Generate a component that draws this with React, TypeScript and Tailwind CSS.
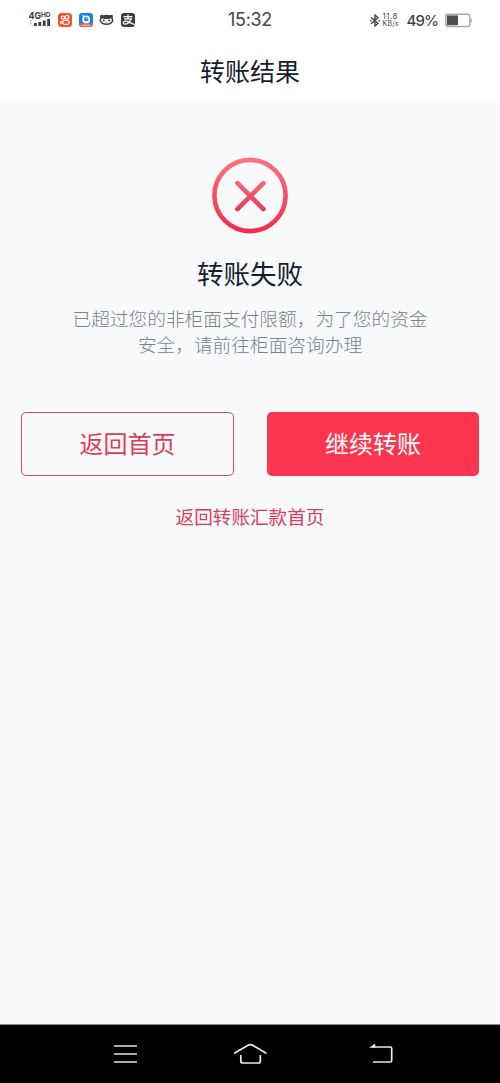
/**
 * @file src/App.tsx
 * @description Pantalla de resultado de transferencia (转账结果) con estado fallido.
 */

function StatusBar() {
  return (
    <div className="grid grid-cols-3 items-center h-10 px-[28px] text-[#444444] font-['Inter','Noto_Sans_CJK_SC',sans-serif]">
      {/* Señal y apps */}
      <div className="flex items-center">
        <svg className="w-[24px] h-[18px] shrink-0" viewBox="0 0 24 18" fill="#3c3c3c">
          <text x="0.5" y="7.6" fontSize="9.5" fontWeight="700" fontFamily="Inter, sans-serif" textLength="12.5" lengthAdjust="spacingAndGlyphs">4G</text>
          <text x="13" y="5.8" fontSize="6.5" fontWeight="700" fontFamily="Inter, sans-serif" textLength="9.5" lengthAdjust="spacingAndGlyphs">HD</text>
          <path d="M2 9.3h1.5v1.6H2zM2 11.8h1.5v1.700H2z" opacity="0.35" />
          <rect x="6" y="12" width="2.8" height="3" />
          <rect x="10.4" y="11" width="2.8" height="4" />
          <rect x="14.8" y="9.5" width="2.8" height="5.5" />
          <rect x="19.2" y="8" width="2.8" height="7" />
        </svg>
        <svg className="w-[14px] h-[14px] ml-[6px] shrink-0" viewBox="0 0 14 14" fill="none" stroke="#fff">
          <rect width="14" height="14" rx="3.5" fill="#f4502a" stroke="none" />
          <circle cx="5" cy="4.6" r="1.6" strokeWidth="1.2" />
          <circle cx="9" cy="4.3" r="1.9" strokeWidth="1.2" />
          <rect x="5" y="7.5" width="6" height="3.8" rx="1.2" strokeWidth="1.2" />
          <path d="M5 9.2L2.8 8v3L5 9.9" strokeWidth="1" />
        </svg>
        <svg className="w-[14px] h-[14px] ml-[7px] shrink-0" viewBox="0 0 14 14">
          <rect width="14" height="14" rx="3" fill="#1683e8" />
          <path d="M0 10.5h14V11a3 3 0 0 1-3 3H3a3 3 0 0 1-3-3z" fill="#f06a45" />
          <path d="M3.8 2.8l1.6 1" stroke="#fff" strokeWidth="1.4" strokeLinecap="round" />
          <circle cx="7.2" cy="6.4" r="3.9" fill="#fff" />
          <circle cx="7.2" cy="6.2" r="2.1" fill="#1683e8" />
          <circle cx="7.8" cy="5.5" r="0.7" fill="#fff" />
          <path d="M3 12.3h8" stroke="#fff" strokeWidth="0.8" opacity="0.7" />
        </svg>
        <svg className="w-[15px] h-[14px] ml-[6px] shrink-0" viewBox="0 0 15 14">
          <path d="M1.2 2.4Q2.6 1.4 4 2.3Q7.5 1.2 11 2.3Q12.4 1.4 13.8 2.4Q14.3 3.6 13.6 4.6Q14.8 6.6 14 8.8Q12 12 7.5 12T1 8.8Q0.2 6.6 1.4 4.6Q0.7 3.6 1.2 2.4z" fill="#3f3f3f" />
          <path d="M2 7Q2 5.4 4 5.6Q7.5 6.6 11 5.6Q13 5.4 13 7Q12.5 10.4 7.5 10.4T2 7z" fill="#fff" />
          <circle cx="4.8" cy="7.5" r="1" fill="#3f3f3f" />
          <circle cx="10.2" cy="7.5" r="1" fill="#3f3f3f" />
          <path d="M6.7 9.2h1.6" stroke="#3f3f3f" strokeWidth="0.7" />
        </svg>
        <svg className="w-[14px] h-[14px] ml-[7px] shrink-0" viewBox="0 0 14 14" fill="none" stroke="#fff" strokeWidth="1.2">
          <rect width="14" height="14" rx="3" fill="#3f3f3f" stroke="none" />
          <path d="M2.5 3.6h9M7 1.5v4.3M3 5.9h8M9.8 6Q8.4 10.8 4.2 11.2Q1.8 11 2.4 9.2Q4 7.2 8 9.2L13.6 11.6" />
        </svg>
      </div>

      <div className="text-center text-[18px] leading-none tracking-[-0.3px]">15:32</div>

      {/* Bluetooth, red y batería */}
      <div className="flex items-center justify-end">
        <svg className="w-[10px] h-[15px] shrink-0" viewBox="0 0 10 15" fill="none" stroke="#444" strokeWidth="1.4">
          <path d="M1 4.2L8 10.2L5 13V2L8 4.8L1 10.8" />
          <path d="M0.2 7.5h1.4M8.4 7.5h1.4" />
        </svg>
        <div className="ml-[3px] w-[17px] text-[8px] leading-[8px] whitespace-nowrap">
          <div className="tracking-[0.45px]">11.8</div>
          <div className="text-[7px] tracking-[0.2px]">KB/s</div>
        </div>
        <span className="ml-[7px] text-[15px] leading-none font-medium tracking-[-0.9px] whitespace-nowrap">49%</span>
        <svg className="w-[27px] h-[15px] ml-[7px] shrink-0" viewBox="0 0 27 15">
          <rect x="0.8" y="1.2" width="24" height="12.2" rx="2" fill="#fff" stroke="#aaa" strokeWidth="1.5" />
          <rect x="2" y="2.4" width="11" height="9.8" fill="#505050" />
          <rect x="25.4" y="5.5" width="1.4" height="4" rx="0.7" fill="#aaa" />
        </svg>
      </div>
    </div>
  );
}

function FailIcon() {
  return (
    <svg className="w-[78px] h-[78px]" viewBox="0 0 78 78" fill="none">
      <defs>
        <linearGradient id="fail" gradientUnits="userSpaceOnUse" x1="39" y1="0" x2="39" y2="78">
          <stop offset="0" stopColor="#fb7580" />
          <stop offset="1" stopColor="#ef2a4b" />
        </linearGradient>
        <linearGradient id="cross" gradientUnits="userSpaceOnUse" x1="39" y1="24" x2="39" y2="54">
          <stop offset="0" stopColor="#f56878" />
          <stop offset="1" stopColor="#ec3654" />
        </linearGradient>
      </defs>
      <circle cx="39" cy="38.5" r="35.6" stroke="url(#fail)" strokeWidth="4.6" />
      <path d="M26.4 26.1L52.4 52.1M52.4 26.1L26.4 52.1" stroke="url(#cross)" strokeWidth="4.6" strokeLinecap="round" />
    </svg>
  );
}

function NavBar() {
  return (
    <nav className="flex items-center justify-between h-[59px] pl-[108px] pr-[105px] bg-black border-t border-[#8c8c8c]">
      <svg className="w-[34px] h-[24px]" viewBox="0 0 34 24" stroke="#e0e0e0" strokeWidth="1.7">
        <path d="M6 4h23M6 12h23M6 20h23" />
      </svg>
      <svg className="w-[34px] h-[24px] -ml-[3px]" viewBox="0 0 34 24" fill="none" stroke="#e8e8e8" strokeWidth="1.7" strokeLinecap="round" strokeLinejoin="round">
        <path d="M1.8 11.1L15 3.2Q17.3 1.9 19.6 3.2L32.8 11.1" />
        <path d="M7.8 13.5V19q0 2 2 2h15.5q2 0 2-2v-5.5" />
      </svg>
      <svg className="w-[34px] h-[24px]" viewBox="0 0 34 24" fill="none" stroke="#e8e8e8" strokeWidth="1.7" strokeLinejoin="round">
        <path d="M12 5h17.2q1.5 0 1.5 1.5v12q0 1.5-1.5 1.5H12" />
        <path d="M8 5.8L14.2 1.5v4.3z" fill="#e8e8e8" stroke="none" />
      </svg>
    </nav>
  );
}

export default function App() {
  return (
    <div className="flex flex-col w-[500px] h-[1083px] overflow-hidden bg-[#f7f9fb] font-['Noto_Sans_CJK_SC',sans-serif]">
      <header className="h-[101px] bg-white shrink-0">
        <StatusBar />
        <h1 className="text-center text-[25px] leading-[61px] text-[#15202b]">转账结果</h1>
      </header>

      <main className="flex-1 flex flex-col items-center pt-[56px]">
        <FailIcon />
        <h2 className="mt-[18px] text-[26.5px] leading-[40px] text-[#15202b]">转账失败</h2>
        <p className="mt-[12px] text-center text-[18.7px] leading-[26px] font-light text-[#77828f] whitespace-nowrap">
          已超过您的非柜面支付限额，为了您的资金
          <br />
          安全，请前往柜面咨询办理
        </p>

        {/* Acciones */}
        <div className="flex justify-between w-full mt-[55px] px-[21px]">
          <button className="w-[213px] h-[64px] pb-[2px] rounded-[5px] border border-[#d84a62] bg-transparent text-[24px] text-[#dc3c58]">
            返回首页
          </button>
          <button className="w-[212px] h-[64px] pb-[2px] rounded-[5px] bg-[#fc364f] text-[24px] text-white">
            继续转账
          </button>
        </div>
        <a className="mt-[26px] text-[18.6px] leading-[28px] text-[#d8405a]">返回转账汇款首页</a>
      </main>

      <NavBar />
    </div>
  );
}
